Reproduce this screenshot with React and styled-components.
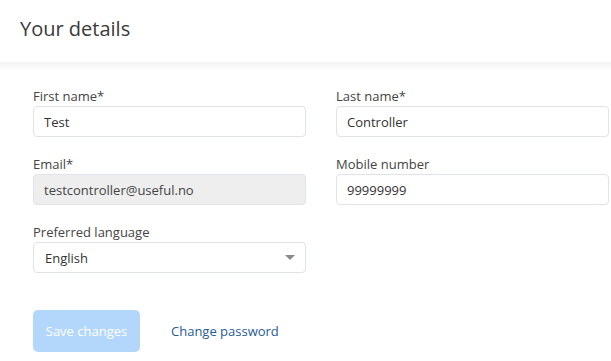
import styled, { createGlobalStyle } from "styled-components";

const Global = createGlobalStyle`
  html, body {
    margin: 0;
    padding: 0;
    background: #fff;
    font-family: "Open Sans", "Liberation Sans", sans-serif;
    color: #333;
  }
`;

const Page = styled.div`
  width: 611px;
  height: 361px;
  overflow: hidden;
  background: #fff;
`;

const Header = styled.header`
  height: 62px;
  box-sizing: border-box;
  padding: 15px 20px 0;
  background: #fff;
  h1 {
    margin: 0;
    font-size: 20px;
    font-weight: 400;
    line-height: 28px;
    color: #3a3a3a;
  }
`;

const Shade = styled.div`
  height: 8px;
  background: linear-gradient(#f3f3f3, #fff);
`;

const Form = styled.form`
  padding: 17px 0 0 33px;
`;

const Grid = styled.div`
  display: grid;
  grid-template-columns: 273px 273px;
  column-gap: 30px;
  row-gap: 18px;
`;

const Field = styled.label`
  display: flex;
  flex-direction: column;
  gap: 1px;
  span {
    font-size: 13px;
    line-height: 18px;
    color: #444;
  }
`;

const Input = styled.input`
  box-sizing: border-box;
  height: 31px;
  width: 100%;
  padding: 0 10px;
  border: 1px solid #e2e2ea;
  border-radius: 4px;
  font-family: inherit;
  font-size: 13px;
  color: #333;
  background: ${(p) => (p.disabled ? "#eeeeee" : "#fff")};
  outline: none;
  &:disabled {
    color: #444;
  }
`;

const SelectBox = styled.div`
  box-sizing: border-box;
  height: 31px;
  display: flex;
  align-items: center;
  justify-content: space-between;
  padding: 0 10px 0 11px;
  border: 1px solid #e2e2ea;
  border-radius: 4px;
  font-size: 13px;
  color: #333;
`;

const Caret = styled.i`
  width: 0;
  height: 0;
  border-left: 5px solid transparent;
  border-right: 5px solid transparent;
  border-top: 5px solid #8a8a8a;
`;

const Actions = styled.div`
  display: flex;
  align-items: center;
  gap: 31px;
  margin-top: 37px;
`;

const SaveButton = styled.button`
  height: 42px;
  width: 107px;
  border: none;
  border-radius: 5px;
  background: #b3d7fa;
  color: #fff;
  font-family: inherit;
  font-size: 13px;
  padding: 0;
`;

const LinkButton = styled.a`
  font-size: 13px;
  color: #1f5b99;
  text-decoration: none;
`;

export default function App() {
  return (
    <Page>
      <Global />
      <Header>
        <h1>Your details</h1>
      </Header>
      <Shade />
      <Form>
        <Grid>
          <Field>
            <span>First name*</span>
            <Input defaultValue="Test" />
          </Field>
          <Field>
            <span>Last name*</span>
            <Input defaultValue="Controller" />
          </Field>
          <Field>
            <span>Email*</span>
            <Input defaultValue="testcontroller@useful.no" disabled />
          </Field>
          <Field>
            <span>Mobile number</span>
            <Input defaultValue="99999999" />
          </Field>
          <Field>
            <span>Preferred language</span>
            <SelectBox>
              English
              <Caret />
            </SelectBox>
          </Field>
        </Grid>
        <Actions>
          <SaveButton type="button">Save changes</SaveButton>
          <LinkButton href="#">Change password</LinkButton>
        </Actions>
      </Form>
    </Page>
  );
}
